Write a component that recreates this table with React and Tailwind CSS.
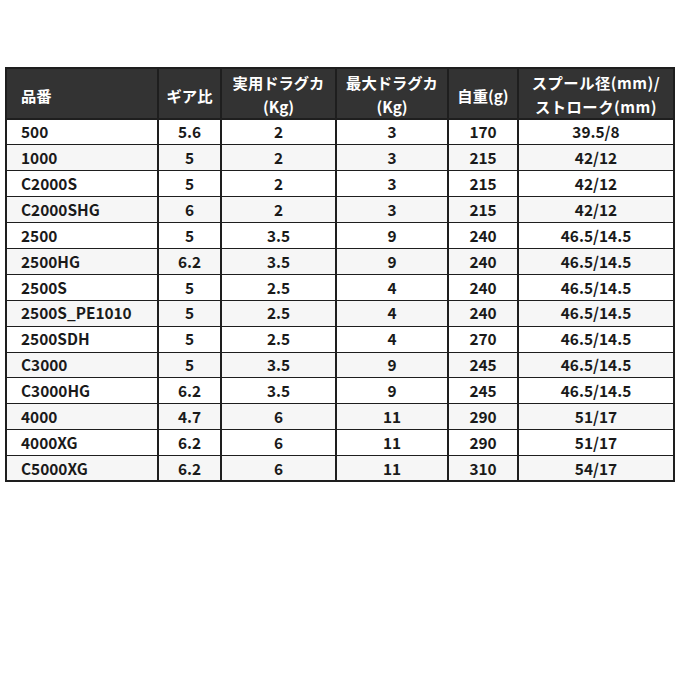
import React from 'react';

const rows = [
  ['500', '5.6', '2', '3', '170', '39.5/8'],
  ['1000', '5', '2', '3', '215', '42/12'],
  ['C2000S', '5', '2', '3', '215', '42/12'],
  ['C2000SHG', '6', '2', '3', '215', '42/12'],
  ['2500', '5', '3.5', '9', '240', '46.5/14.5'],
  ['2500HG', '6.2', '3.5', '9', '240', '46.5/14.5'],
  ['2500S', '5', '2.5', '4', '240', '46.5/14.5'],
  ['2500S_PE1010', '5', '2.5', '4', '240', '46.5/14.5'],
  ['2500SDH', '5', '2.5', '4', '270', '46.5/14.5'],
  ['C3000', '5', '3.5', '9', '245', '46.5/14.5'],
  ['C3000HG', '6.2', '3.5', '9', '245', '46.5/14.5'],
  ['4000', '4.7', '6', '11', '290', '51/17'],
  ['4000XG', '6.2', '6', '11', '290', '51/17'],
  ['C5000XG', '6.2', '6', '11', '310', '54/17'],
];

export default function App() {
  return (
    <div className="w-[680px] h-[680px] bg-white pt-[67px] pl-[5px]" style={{ fontFamily: '"Noto Sans CJK JP", "Noto Sans", sans-serif' }}>
      <table className="w-[668px] table-fixed border-collapse border-2 border-[#1e1e1e] font-bold text-[15.4px] text-[#1a1a1a]">
        <colgroup>
          <col className="w-[152px]" />
          <col className="w-[63px]" />
          <col className="w-[115px]" />
          <col className="w-[112px]" />
          <col className="w-[70px]" />
          <col className="w-[156px]" />
        </colgroup>
        <thead>
          <tr className="h-[51px] bg-[#333333] text-white text-[15.3px] leading-[24px]">
            <th className="border-2 border-[#1e1e1e] text-left pl-[14px] pt-[2px] font-bold">品番</th>
            <th className="border-2 border-[#1e1e1e] pt-[2px] font-bold">ギア比</th>
            <th className="border-2 border-[#1e1e1e] font-bold">実用ドラグカ<br />(Kg)</th>
            <th className="border-2 border-[#1e1e1e] font-bold">最大ドラグカ<br />(Kg)</th>
            <th className="border-2 border-[#1e1e1e] pt-[2px] font-bold">自重(g)</th>
            <th className="border-2 border-[#1e1e1e] font-bold tracking-[0.5px]">スプール径(mm)/<br />ストローク(mm)</th>
          </tr>
        </thead>
        <tbody>
          {rows.map((r, i) => (
            <tr key={r[0]} className={i % 2 === 1 ? 'h-[25.9px] bg-[#f6f6f6]' : 'h-[25.9px] bg-white'}>
              {r.map((c, j) => (
                <td
                  key={j}
                  className={
                    j === 0
                      ? 'border-y border-x-2 border-[#1e1e1e] pl-[14px] leading-none text-left'
                      : 'border-y border-x-2 border-[#1e1e1e] leading-none text-center'
                  }
                >
                  {c}
                </td>
              ))}
            </tr>
          ))}
        </tbody>
      </table>
    </div>
  );
}
